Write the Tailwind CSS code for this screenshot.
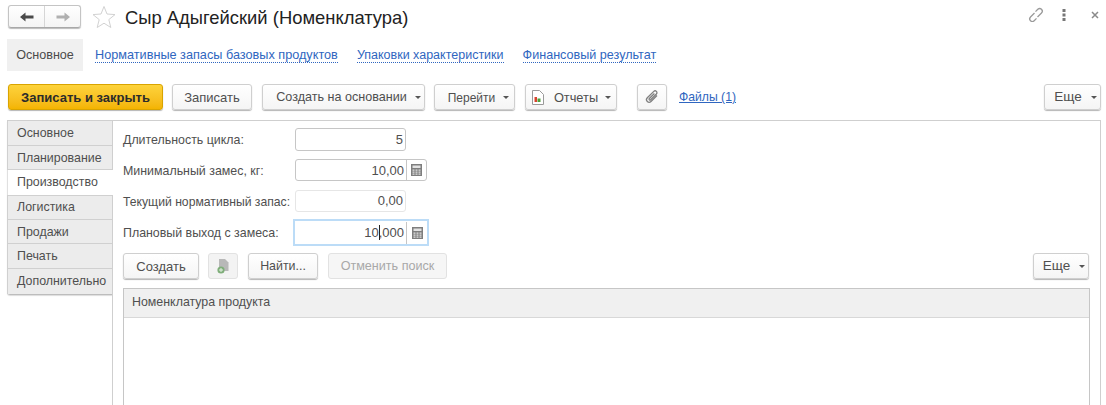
<!DOCTYPE html>
<html lang="ru">
<head>
<meta charset="utf-8">
<script src="https://cdn.jsdelivr.net/npm/@tailwindcss/browser@4"></script>
</head>
<body class="bg-white">
<div class="w-[1106px] h-[405px] overflow-hidden font-['Liberation_Sans',Arial,sans-serif] text-[12.4px] text-[#4f4f4f] relative">
  <!-- header -->
  <div class="h-[34px] pt-[5px] pl-[8px] flex items-start">
    <div class="flex w-[73px] h-[23px] border border-[#c4c4c4] border-b-[#a8a8a8] rounded-[3px] bg-gradient-to-b from-white to-[#f4f4f4] shadow-[0_1px_1px_#bbb]">
      <div class="w-[36px] flex items-center justify-center border-r border-[#d6d6d6]">
        <svg width="16" height="12" viewBox="0 0 16 12"><path d="M1 6 L6.5 1.5 V4.5 H14.5 V7.5 H6.5 V10.5 Z" fill="#4a4a4a"/></svg>
      </div>
      <div class="flex-1 flex items-center justify-center">
        <svg width="16" height="12" viewBox="0 0 16 12"><path d="M15 6 L9.5 1.5 V4.5 H1.5 V7.5 H9.5 V10.5 Z" fill="#b0b0b0"/></svg>
      </div>
    </div>
    <svg class="ml-[11px]" width="24" height="24" viewBox="0 0 24 24"><path d="M12 1.5 L15 9 L23 9.6 L16.8 14.6 L18.8 22.5 L12 18.2 L5.2 22.5 L7.2 14.6 L1 9.6 L9 9 Z" fill="#fff" stroke="#d2d2d2" stroke-width="1"/></svg>
    <div class="ml-[9px] mt-[1px] text-[18.4px] leading-[23px] text-[#222]">Сыр Адыгейский (Номенклатура)</div>
    <div class="ml-auto flex items-center h-[20px] text-[#8a8a8a]">
      <svg width="18" height="18" viewBox="0 0 18 18" fill="none" stroke="#9a9a9a" stroke-width="1.3"><path d="M7.5 7 L3.5 11 A2.6 2.6 0 0 0 7.2 14.7 L9.5 12.4"/><path d="M10.5 11 L14.5 7 A2.6 2.6 0 0 0 10.8 3.3 L8.5 5.6"/></svg>
      <svg class="ml-[17px]" width="4" height="14" viewBox="0 0 4 14" fill="#777"><rect x="0.5" y="1" width="3" height="3"/><rect x="0.5" y="5.5" width="3" height="3"/><rect x="0.5" y="10" width="3" height="3"/></svg>
      <svg class="ml-[25px] mr-[7px]" width="8" height="8" viewBox="0 0 8 8" stroke="#8a8a8a" stroke-width="1.5"><path d="M1 1 L7 7 M7 1 L1 7"/></svg>
    </div>
  </div>
  <!-- page tabs -->
  <div class="h-[32px] mt-[5px] pl-[7px] flex items-center text-[12.6px]">
    <div class="w-[76px] h-full bg-[#f0f0f0] flex items-center justify-center text-[#4b4b4b]">Основное</div>
    <a class="ml-[12px] text-[#2f66c0] border-b border-dotted border-[#2f66c0] leading-[14px] text-[12.7px]">Нормативные запасы базовых продуктов</a>
    <a class="ml-[19px] text-[#2f66c0] border-b border-dotted border-[#2f66c0] leading-[14px] text-[12.5px]">Упаковки характеристики</a>
    <a class="ml-[19px] text-[#2f66c0] border-b border-dotted border-[#2f66c0] leading-[14px]">Финансовый результат</a>
  </div>
  <!-- command bar -->
  <div class="h-[26px] mt-[13px] pl-[8px] pr-[5px] flex items-stretch">
    <button class="w-[155px] pt-px rounded-[3px] border border-[#d9a400] bg-gradient-to-b from-[#fdd33a] to-[#f4b400] font-bold text-[#2b2b2b] text-[13px] shadow-[0_1px_1px_#b5b5b5]">Записать и закрыть</button>
    <button class="ml-[9px] w-[80px] pt-px rounded-[3px] border border-[#cfcfcf] bg-gradient-to-b from-white to-[#f5f5f5] shadow-[0_1px_1px_#b5b5b5] text-[13px]">Записать</button>
    <button class="ml-[10px] w-[163px] pt-px pl-[10px] rounded-[3px] border border-[#cfcfcf] bg-gradient-to-b from-white to-[#f5f5f5] shadow-[0_1px_1px_#b5b5b5] flex items-center justify-center gap-[8px] text-[12.6px]">Создать на основании<span class="w-0 h-0 border-x-[3px] border-x-transparent border-t-[3px] border-t-[#555]"></span></button>
    <button class="ml-[9px] w-[81px] pt-px pl-[8px] rounded-[3px] border border-[#cfcfcf] bg-gradient-to-b from-white to-[#f5f5f5] shadow-[0_1px_1px_#b5b5b5] flex items-center justify-center gap-[8px] text-[12px]">Перейти<span class="w-0 h-0 border-x-[3px] border-x-transparent border-t-[3px] border-t-[#555]"></span></button>
    <button class="ml-[10px] w-[92px] pt-px rounded-[3px] border border-[#cfcfcf] bg-gradient-to-b from-white to-[#f5f5f5] shadow-[0_1px_1px_#b5b5b5] flex items-center justify-center gap-[7px] text-[12.8px]">
      <svg class="mr-[3px]" width="13" height="15" viewBox="0 0 13 15"><path d="M1.5 .5 H8.5 L12.5 4.5 V14.5 H1.5 Z" fill="#fff" stroke="#9a9a9a"/><rect x="3.5" y="7" width="2.5" height="5" fill="#d8432f"/><rect x="6.5" y="8.5" width="3" height="3.5" fill="#4f9f3a"/></svg>Отчеты<span class="w-0 h-0 border-x-[3px] border-x-transparent border-t-[3px] border-t-[#555]"></span></button>
    <button class="ml-[20px] w-[30px] rounded-[3px] border border-[#cfcfcf] bg-gradient-to-b from-white to-[#f5f5f5] shadow-[0_1px_1px_#b5b5b5] flex items-center justify-center">
      <svg width="16" height="16" viewBox="0 0 16 16" fill="none" stroke="#808080" stroke-width="1.3"><path d="M13 6.5 L7 12.5 A2.6 2.6 0 0 1 3.3 8.8 L9.8 2.4 A1.8 1.8 0 0 1 12.4 5 L6.6 10.8 A.9 .9 0 0 1 5.3 9.5 L10.4 4.5"/></svg>
    </button>
    <a class="ml-[12px] self-center text-[#2f66c0] underline text-[12.2px]">Файлы (1)</a>
    <button class="ml-auto w-[57px] pt-px pl-[6px] rounded-[3px] border border-[#cfcfcf] bg-gradient-to-b from-white to-[#f5f5f5] shadow-[0_1px_1px_#b5b5b5] flex items-center justify-center gap-[9px] text-[13.5px]">Еще<span class="w-0 h-0 border-x-[3px] border-x-transparent border-t-[3px] border-t-[#555]"></span></button>
  </div>
  <!-- main -->
  <div class="mt-[10px] ml-[7px] mr-[5px] h-[285px] flex border-t border-[#cfcfcf]">
    <div class="w-[105px] shrink-0 self-start flex flex-col border-b border-[#bdbdbd] rounded-bl-[3px] shadow-[0_1px_1px_#ddd]">
      <div class="h-[24.7px] bg-[#ececec] border-l border-b border-[#d0d0d0] pl-[9px] leading-[24px]">Основное</div>
      <div class="h-[24.7px] bg-[#ececec] border-l border-b border-[#d0d0d0] pl-[9px] leading-[24px]">Планирование</div>
      <div class="h-[24.7px] bg-white border-l border-[#e0e0e0] pl-[9px] leading-[24px] -mr-px relative z-10">Производство</div>
      <div class="h-[24.7px] bg-[#ececec] border-l border-b border-t border-[#d0d0d0] pl-[9px] leading-[22px]">Логистика</div>
      <div class="h-[24.7px] bg-[#ececec] border-l border-b border-[#d0d0d0] pl-[9px] leading-[24px]">Продажи</div>
      <div class="h-[24.7px] bg-[#ececec] border-l border-b border-[#d0d0d0] pl-[9px] leading-[24px]">Печать</div>
      <div class="h-[24.7px] bg-[#ececec] border-l border-[#d0d0d0] pl-[9px] leading-[24px]">Дополнительно</div>
    </div>
    <div class="flex-1 border-l border-r border-[#cfcfcf] pl-[10px] pr-[10px] pt-[7px]">
      <div class="flex items-center h-[23px]">
        <div class="w-[172px] pt-px">Длительность цикла:</div>
        <div class="w-[111px] h-[23px] border border-[#c6c6c6] rounded-[3px] flex items-center justify-end pr-[2px] text-[13px]">5</div>
      </div>
      <div class="flex items-center h-[22px] mt-[8px]">
        <div class="w-[172px] pt-[2px]">Минимальный замес, кг:</div>
        <div class="w-[132px] h-[22px] border border-[#c6c6c6] rounded-[3px] flex items-center text-[13px]">
          <div class="w-[110px] text-right pr-[2px] pt-px">10,00</div>
          <div class="flex-1 h-full border-l border-[#c6c6c6] flex items-center justify-center">
            <svg width="11" height="12" viewBox="0 0 11 12"><rect width="11" height="12" fill="#7e7e7e"/><rect x="1.5" y="1.5" width="8" height="2.5" fill="#e2e2e2"/><path d="M1.5 5.5h2v1.2h-2zM4.5 5.5h2v1.2h-2zM7.5 5.5h2v1.2h-2zM1.5 7.6h2v1.2h-2zM4.5 7.6h2v1.2h-2zM7.5 7.6h2v1.2h-2zM1.5 9.6h2v1.2h-2zM4.5 9.6h2v1.2h-2zM7.5 9.6h2v1.2h-2z" fill="#e2e2e2"/></svg>
          </div>
        </div>
      </div>
      <div class="flex items-center h-[22px] mt-[9px]">
        <div class="w-[172px] whitespace-nowrap pt-[2px] text-[12.2px]">Текущий нормативный запас:</div>
        <div class="w-[111px] h-[22px] border border-[#e6e6e6] rounded-[3px] flex items-center justify-end pr-[2px] text-[13px]">0,00</div>
      </div>
      <div class="flex items-center h-[27px] mt-[7px]">
        <div class="w-[170px] pt-[2px]">Плановый выход с замеса:</div>
        <div class="w-[136px] h-[27px] border-2 border-[#bcdcf7] flex items-center text-[13px]">
          <div class="w-[111px] text-right pr-[2px] pt-px">10<span class="relative inline-block w-0"><span class="absolute left-0 -top-[12px] w-px h-[15px] bg-[#222]"></span></span>,000</div>
          <div class="flex-1 h-[22px] border-l border-[#c6c6c6] flex items-center justify-center">
            <svg width="11" height="12" viewBox="0 0 11 12"><rect width="11" height="12" fill="#7e7e7e"/><rect x="1.5" y="1.5" width="8" height="2.5" fill="#e2e2e2"/><path d="M1.5 5.5h2v1.2h-2zM4.5 5.5h2v1.2h-2zM7.5 5.5h2v1.2h-2zM1.5 7.6h2v1.2h-2zM4.5 7.6h2v1.2h-2zM7.5 7.6h2v1.2h-2zM1.5 9.6h2v1.2h-2zM4.5 9.6h2v1.2h-2zM7.5 9.6h2v1.2h-2z" fill="#e2e2e2"/></svg>
          </div>
        </div>
      </div>
      <div class="flex h-[26px] mt-[7px]">
        <button class="w-[76px] pt-px rounded-[3px] border border-[#cfcfcf] bg-gradient-to-b from-white to-[#f5f5f5] shadow-[0_1px_1px_#b5b5b5] text-[13px]">Создать</button>
        <button class="ml-[9px] w-[30px] rounded-[3px] border border-[#e2e2e2] bg-[#f3f3f3] flex items-center justify-center">
          <svg width="14" height="16" viewBox="0 0 14 16"><path d="M3 1 H9 L12.5 4.5 V13 H3 Z" fill="#b8b8b8"/><circle cx="5" cy="12" r="3.6" fill="#7fae7a"/><path d="M3 12h4M5 10v4" stroke="#e6f0e4" stroke-width="1"/></svg>
        </button>
        <button class="ml-[10px] w-[70px] pt-px rounded-[3px] border border-[#cfcfcf] bg-gradient-to-b from-white to-[#f5f5f5] shadow-[0_1px_1px_#b5b5b5]">Найти...</button>
        <button class="ml-[10px] w-[119px] pt-px rounded-[3px] border border-[#e2e2e2] bg-[#f6f6f6] text-[#a8a8a8] text-[12.6px]">Отменить поиск</button>
        <button class="ml-auto mr-px w-[56px] pt-px pl-[6px] rounded-[3px] border border-[#cfcfcf] bg-gradient-to-b from-white to-[#f5f5f5] shadow-[0_1px_1px_#b5b5b5] flex items-center justify-center gap-[9px] text-[13.5px]">Еще<span class="w-0 h-0 border-x-[3px] border-x-transparent border-t-[3px] border-t-[#555]"></span></button>
      </div>
      <div class="mt-[9px] h-[140px] border border-[#c6c6c6]">
        <div class="h-[29px] bg-[#f0f0f0] border-b border-[#d8d8d8] pl-[8px] leading-[27px]">Номенклатура продукта</div>
      </div>
    </div>
  </div>
</div>
</body>
</html>
